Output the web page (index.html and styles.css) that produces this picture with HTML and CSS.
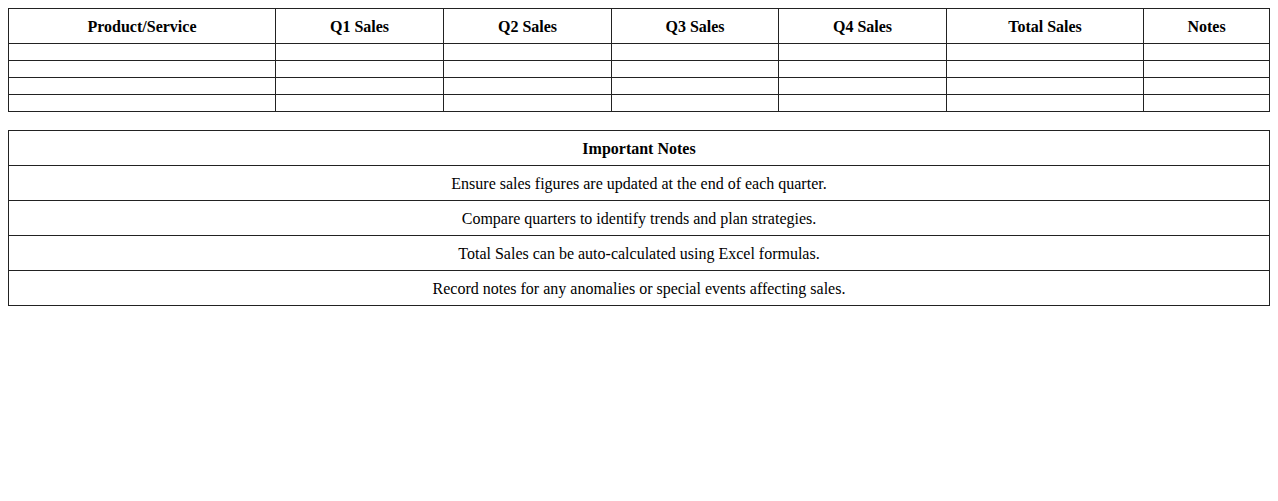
FILE: index.html
```html
<!DOCTYPE html>
<html>
<head>
<meta charset="utf-8">
<link rel="stylesheet" href="styles.css">
</head>
<body>
<table class="sales">
  <colgroup>
    <col class="c-product">
    <col class="c-q">
    <col class="c-q">
    <col class="c-q3">
    <col class="c-q">
    <col class="c-total">
    <col class="c-notes">
  </colgroup>
  <thead>
    <tr>
      <th>Product/Service</th>
      <th>Q1 Sales</th>
      <th>Q2 Sales</th>
      <th>Q3 Sales</th>
      <th>Q4 Sales</th>
      <th>Total Sales</th>
      <th>Notes</th>
    </tr>
  </thead>
  <tbody>
    <tr><td></td><td></td><td></td><td></td><td></td><td></td><td></td></tr>
    <tr><td></td><td></td><td></td><td></td><td></td><td></td><td></td></tr>
    <tr><td></td><td></td><td></td><td></td><td></td><td></td><td></td></tr>
    <tr><td></td><td></td><td></td><td></td><td></td><td></td><td></td></tr>
  </tbody>
</table>
<table class="notes">
  <thead>
    <tr><th>Important Notes</th></tr>
  </thead>
  <tbody>
    <tr><td>Ensure sales figures are updated at the end of each quarter.</td></tr>
    <tr><td>Compare quarters to identify trends and plan strategies.</td></tr>
    <tr><td>Total Sales can be auto-calculated using Excel formulas.</td></tr>
    <tr><td>Record notes for any anomalies or special events affecting sales.</td></tr>
  </tbody>
</table>
</body>
</html>
```
FILE: styles.css
```css
body {
  margin: 8px;
  font-family: "Liberation Serif", "Times New Roman", serif;
  font-size: 16px;
  color: #000;
  background: #fff;
}
table {
  width: 100%;
  border-collapse: collapse;
}
th, td {
  border: 1px solid #222;
  padding: 9px 8px 7px;
  text-align: center;
}
th {
  font-weight: bold;
}
.sales {
  table-layout: fixed;
  margin-bottom: 18px;
}
.c-product { width: 267px; }
.c-q { width: 168px; }
.c-q3 { width: 167px; }
.c-total { width: 197px; }
.c-notes { width: 126px; }
```
